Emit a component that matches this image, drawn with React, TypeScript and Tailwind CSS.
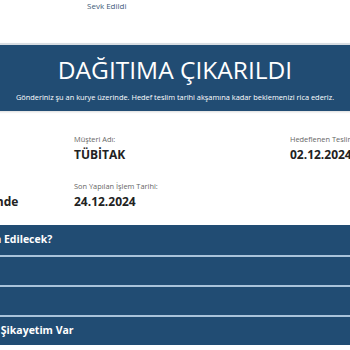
export default function App() {
  const rows = [
    "Gönderim Ne Zaman Teslim Edilecek?",
    "Adresimi Değiştir",
    "İade Talebi",
    "Teslimat Süreleri Hakkında Şikayetim Var",
  ];

  return (
    <div className="w-[350px] h-[350px] overflow-hidden bg-white font-['Open_Sans',sans-serif]">
      <div className="flex justify-center">
        <div className="w-[700px] shrink-0">
          {/* üst durum çubuğu */}
          <div className="h-[43px] pl-[262px] pt-0 text-[8px] leading-[12px] text-[#3d5a78]">
            Sevk Edildi
          </div>

          {/* başlık bandı */}
          <div className="bg-[#214c73] border-t-2 border-[#d8dde2] h-[68px] flex flex-col items-center pt-[10px] shadow-[0_1px_2px_rgba(0,0,0,0.15)]">
            <h1 className="text-[24.5px] leading-[30px] text-white">
              DAĞITIMA ÇIKARILDI
            </h1>
            <p className="text-[7.4px] leading-[10px] text-white mt-[7px]">
              Gönderiniz şu an kurye üzerinde. Hedef teslim tarihi akşamına kadar beklemenizi rica ederiz.
            </p>
          </div>

          {/* bilgi alanı */}
          <div className="h-[114px] grid grid-cols-[216px_216px_216px] pl-[33px] pt-[22px] text-[#222]">
            <div className="flex flex-col ml-[4px]">
              <span className="text-[7.4px] text-[#666] leading-[12px]">Gönderi No:</span>
              <span className="text-[12px] font-bold leading-[18px] mt-[1px]">81234</span>
              <span className="text-[7.4px] text-[#666] leading-[12px] mt-[16px]">Gönderi Durumu:</span>
              <span className="text-[12px] font-bold leading-[18px] mt-[1px]">Teslimat Kuryesi Üzerinde</span>
            </div>
            <div className="flex flex-col">
              <span className="text-[7.4px] text-[#666] leading-[12px]">Müşteri Adı:</span>
              <span className="text-[12px] font-bold leading-[18px] mt-[1px]">TÜBİTAK</span>
              <span className="text-[7.4px] text-[#666] leading-[12px] mt-[16px]">Son Yapılan İşlem Tarihi:</span>
              <span className="text-[12px] font-bold leading-[18px] mt-[1px]">24.12.2024</span>
            </div>
            <div className="flex flex-col">
              <span className="text-[7.4px] text-[#666] leading-[12px]">Hedeflenen Teslim Tarihi:</span>
              <span className="text-[12px] font-bold leading-[18px] mt-[1px]">02.12.2024</span>
            </div>
          </div>

          {/* sık sorulanlar */}
          <div className="flex flex-col">
            {rows.map((r, i) => (
              <div
                key={i}
                className="h-[30px] bg-[#214c73] border-t-2 border-[#a9c3da] first:border-t-0 flex items-center pl-[31px] text-white text-[10.5px] font-bold whitespace-nowrap"
              >
                {r}
              </div>
            ))}
          </div>
        </div>
      </div>
    </div>
  );
}
